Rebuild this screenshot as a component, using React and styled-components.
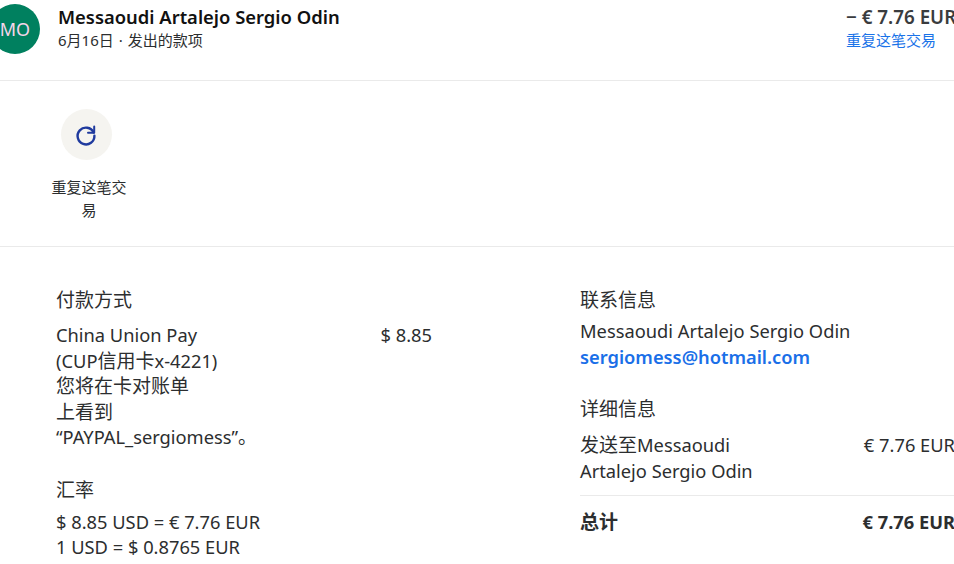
import React from 'react';
import styled, { createGlobalStyle } from 'styled-components';

const FONT = `"Noto Sans", "Noto Sans CJK SC", sans-serif`;

const GlobalStyle = createGlobalStyle`
  html, body { margin: 0; padding: 0; background: #fff; }
  body { font-family: ${FONT}; color: #2c2e2f; overflow: hidden; }
`;

const App = () => {
  return (
    <Page>
      <GlobalStyle />
      <Header>
        <Avatar>MO</Avatar>
        <HeaderText>
          <Name>Messaoudi Artalejo Sergio Odin</Name>
          <Sub>
            6月16日<Dot>·</Dot>发出的款项
          </Sub>
        </HeaderText>
        <HeaderRight>
          <Amount>− € 7.76 EUR</Amount>
          <RepeatLink>重复这笔交易</RepeatLink>
        </HeaderRight>
      </Header>
      <Actions>
        <Action>
          <ActionCircle>
            <svg width="24" height="24" viewBox="0 0 24 24" fill="none" stroke="#1f3a9e" strokeWidth="2.4" strokeLinecap="round">
              <path d="M19.6 9.4A8.4 8.4 0 1 0 20.4 12.6" />
              <path d="M20.2 3.6v6.2h-6.2" fill="none" strokeWidth="2" strokeLinejoin="round" />
            </svg>
          </ActionCircle>
          <ActionLabel>重复这笔交易</ActionLabel>
        </Action>
      </Actions>
      <Details>
        <LeftCol>
          <Section>
            <SectionTitle>付款方式</SectionTitle>
            <PayRow>
              <Text>
                China Union Pay
                <br />
                (CUP<Cjk>信用卡</Cjk>x-4221)
                <br />
                <Cjk>您将在卡对账单</Cjk>
                <br />
                <Cjk>上看到</Cjk>
                <br />
                “PAYPAL_sergiomess”<Cjk>。</Cjk>
              </Text>
              <Text>$ 8.85</Text>
            </PayRow>
          </Section>
          <Section>
            <SectionTitle $gap={5}>汇率</SectionTitle>
            <Text>
              $ 8.85 USD = € 7.76 EUR
              <br />1 USD = $ 0.8765 EUR
            </Text>
          </Section>
        </LeftCol>
        <RightCol>
          <RightSection>
            <SectionTitle $gap={4}>联系信息</SectionTitle>
            <Text>Messaoudi Artalejo Sergio Odin</Text>
            <Email>sergiomess@hotmail.com</Email>
          </RightSection>
          <RightSection>
            <SectionTitle $gap={9}>详细信息</SectionTitle>
            <LineRow>
              <Text>
                <Cjk>发送至</Cjk>Messaoudi
                <br />
                Artalejo Sergio Odin
              </Text>
              <Text>€ 7.76 EUR</Text>
            </LineRow>
            <TotalRow>
              <Strong>
                <Cjk>总计</Cjk>
              </Strong>
              <Strong>€ 7.76 EUR</Strong>
            </TotalRow>
          </RightSection>
        </RightCol>
      </Details>
    </Page>
  );
};

export default App;

const Page = styled.div`
  width: 954px;
  height: 564px;
  overflow: hidden;
`;

const Header = styled.div`
  display: flex;
  width: 962px;
  height: 81px;
  box-sizing: border-box;
  border-bottom: 1px solid #eaeaea;
  padding-top: 4px;
`;

const Avatar = styled.div`
  width: 50px;
  height: 50px;
  margin-left: -10px;
  border-radius: 50%;
  background: #00805f;
  color: #f5d5ea;
  font-size: 18px;
  display: flex;
  align-items: center;
  justify-content: center;
`;

const HeaderText = styled.div`
  margin-left: 18px;
  flex: 1;
`;

const Name = styled.div`
  font-size: 18.4px;
  font-weight: 600;
  line-height: 26px;
  color: #111;
`;

const Sub = styled.div`
  font-size: 15px;
  line-height: 20px;
`;

const Dot = styled.span`
  margin: 0 5px;
`;

const HeaderRight = styled.div`
  width: 116px;
`;

const Amount = styled.div`
  font-size: 18.8px;
  font-weight: 600;
  line-height: 26px;
  white-space: nowrap;
  color: #3a3c3e;
`;

const RepeatLink = styled.a`
  display: block;
  font-size: 15px;
  line-height: 20px;
  color: #1a73e8;
`;

const Actions = styled.div`
  height: 166px;
  box-sizing: border-box;
  border-bottom: 1px solid #eaeaea;
  padding: 28px 0 0 49px;
`;

const Action = styled.div`
  width: 80px;
  display: flex;
  flex-direction: column;
  align-items: center;
`;

const ActionCircle = styled.div`
  width: 51px;
  height: 51px;
  margin-right: 6px;
  border-radius: 50%;
  background: #f5f4f0;
  display: flex;
  align-items: center;
  justify-content: center;
`;

const ActionLabel = styled.div`
  margin-top: 16px;
  font-size: 15px;
  line-height: 23px;
  text-align: center;
`;

const Details = styled.div`
  display: flex;
  padding: 39px 0 0 56px;
`;

const LeftCol = styled.div`
  width: 376px;
  flex-shrink: 0;
`;

const RightCol = styled.div`
  width: 375px;
  flex-shrink: 0;
  margin-left: 148px;
`;

const Section = styled.div`
  margin-bottom: 26px;
`;

const RightSection = styled.div`
  margin-bottom: 26px;
`;

const SectionTitle = styled.div`
  font-size: 19px;
  line-height: 28px;
  margin-bottom: ${(p) => p.$gap ?? 8}px;
`;

const Text = styled.div`
  font-size: 18.3px;
  line-height: 25.5px;
  white-space: nowrap;
`;

const Cjk = styled.span`
  font-size: 19px;
  line-height: 1;
`;

const Email = styled.a`
  display: block;
  font-size: 18.3px;
  line-height: 25.5px;
  font-weight: 600;
  color: #1a6fe8;
`;

const PayRow = styled.div`
  display: flex;
  justify-content: space-between;
`;

const LineRow = styled.div`
  display: flex;
  justify-content: space-between;
  padding-bottom: 12px;
  border-bottom: 1px solid #eaeaea;
`;

const TotalRow = styled.div`
  display: flex;
  justify-content: space-between;
  padding-top: 13px;
`;

const Strong = styled.div`
  font-size: 18.3px;
  line-height: 25px;
  font-weight: 700;
`;
